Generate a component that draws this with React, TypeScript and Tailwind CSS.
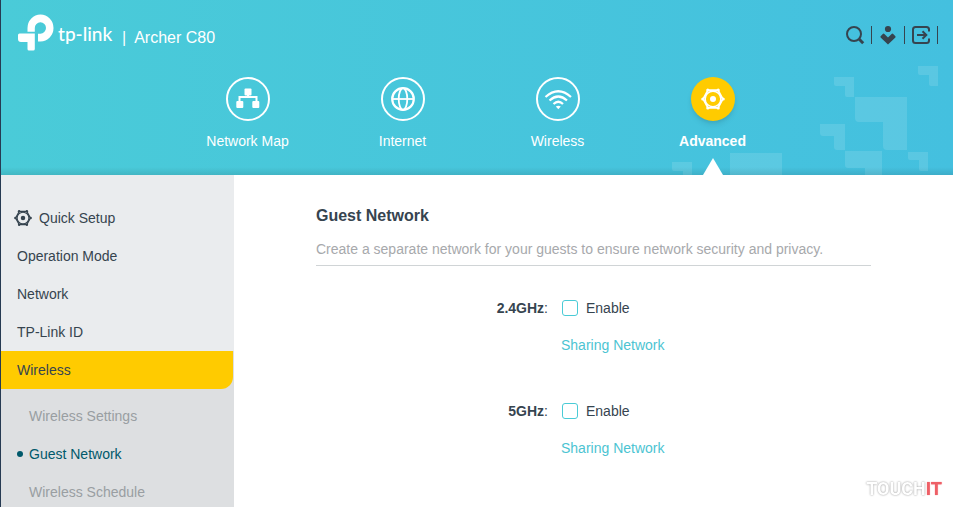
import type { ReactNode } from 'react';
import clsx from 'clsx';

function Logo() {
  return (
    <svg viewBox="0 0 36 37" className="h-[37px] w-9 fill-white" aria-hidden="true">
      <path d="M9.5 17.8V14a13 13.5 0 1 1 13 13.500H20V19.700h2.300A5.600 5.700 0 1 0 16.800 14v3.800z" />
      <path d="M1.500 19.500H16.800V35a1.600 1.600 0 0 1-1.600 1.600H11A1.600 1.600 0 0 1 9.500 35V28H3a3 3 0 0 1-3-3V21a1.500 1.500 0 0 1 1.500-1.500z" />
    </svg>
  );
}

function SearchIcon() {
  return (
    <svg viewBox="0 0 20 20" className="size-5" fill="none" stroke="currentColor" aria-hidden="true">
      <circle cx="9" cy="9" r="7" strokeWidth="2" />
      <path d="M14 14l4.2 4.2" strokeWidth="3" />
    </svg>
  );
}

function CloudUserIcon() {
  return (
    <svg viewBox="0 0 20 20" className="size-5" fill="currentColor" aria-hidden="true">
      <circle cx="10" cy="4" r="3.1" />
      <path d="M2.6 11.3l2.2-2.4q.8-.6 1.6 0L10 12.4l3.6-3.5q.8-.6 1.6 0l2.2 2.4q.4.6 0 1.2L10 19.6l-7.4-7.1q-.4-.6 0-1.2z" />
    </svg>
  );
}

function LogoutIcon() {
  return (
    <svg
      viewBox="0 0 20 20"
      className="size-5"
      fill="none"
      stroke="currentColor"
      strokeWidth="2"
      aria-hidden="true"
    >
      <path d="M18 6.5v-2A2.5 2.5 0 0 0 15.5 2h-11A2.5 2.5 0 0 0 2 4.5v11A2.5 2.5 0 0 0 4.5 18h11a2.5 2.5 0 0 0 2.5-2.5v-2" />
      <path d="M6 10h9M11.5 6.3l3.8 3.7-3.8 3.7" />
    </svg>
  );
}

function NetworkMapIcon() {
  return (
    <svg viewBox="0 0 44 44" className="size-11" fill="currentColor" aria-hidden="true">
      <circle cx="22" cy="22" r="21" fill="none" stroke="currentColor" strokeWidth="2" />
      <rect x="18.5" y="11.5" width="7" height="7" rx="1" />
      <rect x="10.3" y="24" width="7" height="7" rx="1" />
      <rect x="26.3" y="24" width="7" height="7" rx="1" />
      <path d="M22 17v3M13.5 25v-5h17v5" fill="none" stroke="currentColor" strokeWidth="2" />
    </svg>
  );
}

function InternetIcon() {
  return (
    <svg viewBox="0 0 44 44" className="size-11" fill="none" stroke="currentColor" aria-hidden="true">
      <circle cx="22" cy="22" r="21" strokeWidth="2" />
      <circle cx="22" cy="22" r="10.8" strokeWidth="2.2" />
      <ellipse cx="22" cy="22" rx="4.3" ry="10.8" strokeWidth="1.8" />
      <path d="M11 22h22" strokeWidth="1.8" />
    </svg>
  );
}

function WirelessIcon() {
  return (
    <svg viewBox="0 0 44 44" className="size-11" fill="none" stroke="currentColor" aria-hidden="true">
      <circle cx="22" cy="22" r="21" strokeWidth="2" />
      <path
        d="M9.5 20Q22.3 8.5 35 20M13.5 23.5Q22.3 15.5 31 23.5M17.5 27Q22.3 22.5 27 27"
        strokeWidth="2.2"
      />
      <path d="M19.8 29.5q2.5-1.5 5 0l-2.5 2.8z" fill="currentColor" stroke="none" />
    </svg>
  );
}

function GearShape() {
  return (
    <>
      <path
        d="M-9.8 0L-5 -8.8H5L9.8 0L5 8.8H-5Z"
        fill="none"
        stroke="currentColor"
        strokeWidth="1.8"
      />
      <circle r="7.8" fill="none" stroke="currentColor" strokeWidth="1.4" />
      <circle r="3" />
      <circle cx="-10.2" r="1.6" />
      <circle cx="10.2" r="1.6" />
      <circle cx="-5.2" cy="-9" r="1.6" />
      <circle cx="5.2" cy="-9" r="1.6" />
      <circle cx="-5.2" cy="9" r="1.6" />
      <circle cx="5.2" cy="9" r="1.6" />
    </>
  );
}

function AdvancedIcon() {
  return (
    <svg
      viewBox="-22 -22 44 44"
      className="size-11 rounded-full bg-[#ffcb00] shadow-md"
      fill="currentColor"
      aria-hidden="true"
    >
      <GearShape />
    </svg>
  );
}

function HeaderPattern() {
  return (
    <svg
      viewBox="0 0 266 109"
      className="absolute right-[15px] bottom-0 h-[109px] w-[266px] fill-white/12"
      aria-hidden="true"
    >
      <path d="M162 11h20v20h-7a2 2 0 0 1-2-2V20h-9a2 2 0 0 1-2-2z" />
      <path d="M246 0h20v20h-7a2 2 0 0 1-2-2V9h-9a2 2 0 0 1-2-2z" />
      <path d="M183 31h52v53h-20a4 4 0 0 1-4-4V56h-24a4 4 0 0 1-4-4z" />
      <path d="M148 58h25v26h-8a3 3 0 0 1-3-3V70h-11a3 3 0 0 1-3-3z" />
      <path d="M173 85h37v24h-17v-7h-17a3 3 0 0 1-3-3z" />
      <path d="M236 86h20v19h-7a2 2 0 0 1-2-2v-9h-9a2 2 0 0 1-2-2z" />
      <path d="M58 87h52v22h-52z" />
      <path d="M0 96h20v13h-9v-4h-9a2 2 0 0 1-2-2z" />
    </svg>
  );
}

const tools = [
  { id: 'search', label: 'Search', Icon: SearchIcon },
  { id: 'account', label: 'Account', Icon: CloudUserIcon },
  { id: 'logout', label: 'Log out', Icon: LogoutIcon },
];

const tabs = [
  { id: 'map', title: 'Network Map', Icon: NetworkMapIcon },
  { id: 'internet', title: 'Internet', Icon: InternetIcon },
  { id: 'wireless', title: 'Wireless', Icon: WirelessIcon },
  { id: 'advanced', title: 'Advanced', Icon: AdvancedIcon, active: true },
];

const menu = ['Operation Mode', 'Network', 'TP-Link ID'];

const wirelessMenu = [
  { title: 'Wireless Settings' },
  { title: 'Guest Network', active: true },
  { title: 'Wireless Schedule' },
];

const bands = [
  { id: 'band-2g', name: '2.4GHz' },
  { id: 'band-5g', name: '5GHz' },
];

function Header() {
  return (
    <header className="relative shrink-0 bg-linear-to-r from-[#4acbd8] to-[#44c0df] text-white">
      <HeaderPattern />
      <div className="absolute inset-x-0 bottom-0 h-2 bg-linear-to-b from-transparent to-black/10" />
      <div className="relative flex items-start justify-between pt-3.5 pr-[15px] pl-[17px]">
        <div className="flex items-start">
          <Logo />
          <span className="ml-1 w-[56px] pt-1 font-['Lato'] text-[19px] leading-8 font-medium">tp-link</span>
          <span className="ml-2 pt-3 text-base leading-6">|</span>
          <span className="ml-2 pt-3 text-base leading-6">Archer C80</span>
        </div>
        <div className="mt-3 flex text-[#36444f]">
          {tools.map(({ id, label, Icon }) => (
            <button
              key={id}
              type="button"
              aria-label={label}
              className="flex h-[18px] w-[33px] items-center justify-center border-r border-current"
            >
              <Icon />
            </button>
          ))}
        </div>
      </div>
      <nav className="relative mt-[26px] flex justify-center pl-1.5">
        {tabs.map(({ id, title, Icon, active }) => (
          <a
            key={id}
            href={`#${id}`}
            className={clsx('flex w-[155px] flex-col items-center text-sm', active && 'font-bold')}
          >
            <Icon />
            <span className="mt-2.5 leading-5">{title}</span>
            <svg
              viewBox="0 0 20 17"
              className={clsx('mt-[7px] h-[17px] w-5 fill-white', !active && 'invisible')}
              aria-hidden="true"
            >
              <path d="M10 0l10 17H0z" />
            </svg>
          </a>
        ))}
      </nav>
    </header>
  );
}

function MenuLink({ children, className }: { children: ReactNode; className?: string }) {
  return (
    <a href="#menu" className={clsx('flex h-[38px] shrink-0 items-center', className)}>
      {children}
    </a>
  );
}

function Sidebar() {
  return (
    <aside className="flex w-[233px] shrink-0 flex-col overflow-hidden bg-[#eaecee] pt-6 text-sm">
      <MenuLink className="gap-[7px] pl-[13px]">
        <svg viewBox="-12 -12 24 24" className="size-[18px] fill-current" aria-hidden="true">
          <GearShape />
        </svg>
        Quick Setup
      </MenuLink>
      {menu.map((title) => (
        <MenuLink key={title} className="pl-4">
          {title}
        </MenuLink>
      ))}
      <div className="grow bg-[#dddfe1]">
        <MenuLink className="mr-px rounded-br-xl bg-[#ffcb00] pl-4">Wireless</MenuLink>
        <div className="pt-2">
          {wirelessMenu.map(({ title, active }) => (
            <MenuLink key={title} className={clsx('pl-4', active ? 'text-[#00596b]' : 'text-[#999ea2]')}>
              <span className={clsx('mr-1.5 size-1.5 rounded-full', active && 'bg-current')} />
              {title}
            </MenuLink>
          ))}
        </div>
      </div>
    </aside>
  );
}

function GuestNetwork() {
  return (
    <main className="grow bg-white px-[82px] pt-[31px] text-sm">
      <h1 className="text-base leading-5 font-bold">Guest Network</h1>
      <p className="mt-[13px] border-b border-[#d0d4d6] pb-1.5 leading-5 text-[#a7a9ac]">
        Create a separate network for your guests to ensure network security and privacy.
      </p>
      <div className="mt-8 flex flex-col gap-[46px]">
        {bands.map(({ id, name }) => (
          <div key={id} className="grid grid-cols-[232px_1fr] gap-x-3.5 gap-y-[17px] leading-5">
            <div className="text-right">
              <b>{name}</b>:
            </div>
            <label htmlFor={id} className="flex items-center gap-2">
              <input
                id={id}
                type="checkbox"
                className="size-4 appearance-none rounded-[3px] border border-[#4acbd6] checked:bg-[#4acbd6]"
              />
              Enable
            </label>
            <a href="#sharing" className="col-start-2 -ml-px justify-self-start text-[#4cc4d2]">
              Sharing Network
            </a>
          </div>
        ))}
      </div>
    </main>
  );
}

export default function App() {
  return (
    <div className="flex h-screen flex-col overflow-hidden border-l border-[#263a52] font-['Liberation_Sans',Arial,sans-serif] text-[#36444f]">
      <Header />
      <div className="flex min-h-0 grow">
        <Sidebar />
        <GuestNetwork />
      </div>
      <div className="fixed right-[11px] bottom-2 font-['Roboto',sans-serif] text-lg leading-5 font-bold text-white [text-shadow:0_0_2px_#888]">
        TOUCH<span className="text-[#ee5f66] [text-shadow:0_0_1px_#ee5f66]">IT</span>
      </div>
    </div>
  );
}
